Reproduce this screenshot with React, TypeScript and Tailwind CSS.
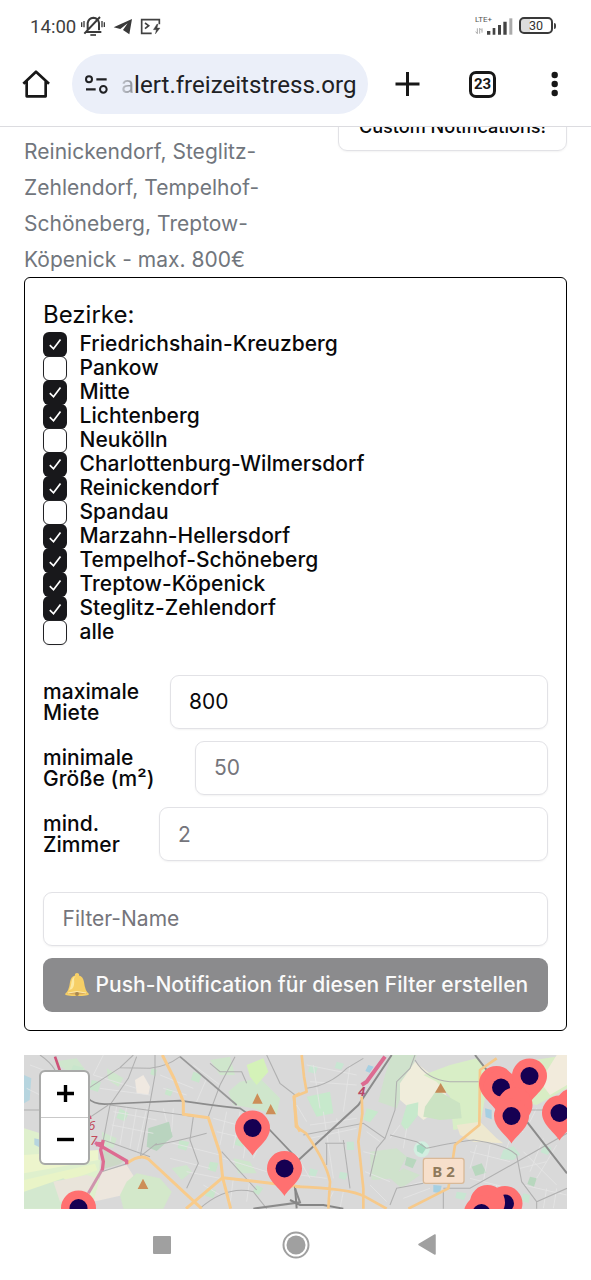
import React from "react";

const districts: [string, boolean][] = [
  ["Friedrichshain-Kreuzberg", true],
  ["Pankow", false],
  ["Mitte", true],
  ["Lichtenberg", true],
  ["Neukölln", false],
  ["Charlottenburg-Wilmersdorf", true],
  ["Reinickendorf", true],
  ["Spandau", false],
  ["Marzahn-Hellersdorf", true],
  ["Tempelhof-Schöneberg", true],
  ["Treptow-Köpenick", true],
  ["Steglitz-Zehlendorf", true],
  ["alle", false],
];

function StatusBar() {
  return (
    <div className="flex h-[54px] items-start pt-[15px] pr-[35px] pl-[30px] font-['Roboto',sans-serif]">
      <span className="w-[47px] pt-[2px] text-[18.6px] leading-[21px] text-[#3f3f3f]">14:00</span>
      <svg className="ml-[3px] h-[22px] w-[26px]" viewBox="240 44 78 66" fill="none" stroke="#3a3a3a" strokeWidth="6">
        <path d="M263 90V68q3-15 17-16q15 1 17 16v22M257 95h47M253 100L300 50" />
        <path d="M271 104h17" strokeWidth="5" />
        <path d="M245 66v14M252 62v19M306 62v19M313 66v14" strokeWidth="4" />
      </svg>
      <svg className="ml-[7px] h-[22px] w-[20px]" viewBox="340 44 60 66">
        <path d="M342 81L397 56L389 102L370 89L384 69L362 86Z" fill="#393939" />
      </svg>
      <svg className="ml-[7px] h-[22px] w-[22px]" viewBox="420 44 66 66" fill="none" stroke="#414141" strokeWidth="5">
        <path d="M455 99H425V58H478V72" />
        <path d="M435 68L446 76L435 85" strokeWidth="5" />
        <path d="M471 71L460 88H469L466 101L480 83H471L474 72Z" fill="#414141" strokeWidth="1" />
      </svg>
      <div className="flex-1" />
      <div className="flex h-[22px] w-[38px] items-start">
        <div className="flex h-[22px] w-[11px] flex-col whitespace-nowrap">
          <span className="text-[8px] leading-[10px] text-[#555]">LTE+</span>
          <svg className="h-[12px] w-[9px]" viewBox="0 0 27 36" fill="none" stroke="#999" strokeWidth="2.500">
            <path d="M7 10v16l-5-6M14 26V10l6 6M21 10v13" />
          </svg>
        </div>
        <svg className="mt-[3px] h-[17px] w-[27px] shrink-0" viewBox="554 53 81 51">
          <path d="M557 92h10v11h-10z M574 83h8v20h-8z M590 74h9v29h-9z M606 64h10v39h-10z" fill="#444" />
          <path d="M624 54h9v49h-9z" fill="#aaa" />
        </svg>
      </div>
      <div className="ml-[6px] flex items-center pt-[2px]">
        <div className="flex h-[17px] w-[34px] items-center justify-center rounded-[5px] border-2 border-[#393939] bg-[linear-gradient(90deg,#ddd_30%,#fff_30%)] pt-px text-[12.500px] leading-[14px] text-[#333]">30</div>
        <div className="ml-px h-[6px] w-[2px] rounded-r bg-[#444]" />
      </div>
    </div>
  );
}

function Toolbar() {
  return (
    <div className="flex h-[60px] items-center font-['Roboto',sans-serif]">
      <svg className="ml-[21px] h-[30px] w-[30px]" viewBox="63 206 90 90" fill="none" stroke="#171717" strokeWidth="8">
        <path d="M70 250L108 214L147 250M80 243V288H137V243" strokeLinejoin="round" />
      </svg>
      <div className="ml-[21px] flex h-[60px] w-[296px] items-center rounded-full bg-[#ebeff9] pl-[12px]">
        <svg className="h-[22px] w-[25px]" viewBox="252 218 75 66" fill="none" stroke="#202124" strokeWidth="6">
          <circle cx="267" cy="237" r="9" />
          <circle cx="310" cy="267" r="10" />
          <path d="M289 237h31M258 267h29" strokeWidth="6.500" />
        </svg>
        <span className="ml-[12px] pt-[2px] text-[24.1px] leading-[32px] whitespace-nowrap text-[#202124]">
          <span className="bg-gradient-to-r from-[#c3c6ce] to-[#8a8d94] bg-clip-text text-transparent">a</span>lert.freizeitstress.org
        </span>
      </div>
      <svg className="ml-[26px] h-[26px] w-[26px]" viewBox="0 0 26 26" stroke="#171717" strokeWidth="3">
        <path d="M1.500 13H25.500M13.500 1V25" />
      </svg>
      <div className="ml-[49px] flex h-[27px] w-[27px] items-center justify-center rounded-[7px] border-[3px] border-[#171717] text-[15px] font-bold text-[#171717]">23</div>
      <svg className="ml-[54px] h-[26px] w-[10px]" viewBox="0 0 10 26" fill="#171717">
        <circle cx="4.700" cy="4" r="3.200" />
        <circle cx="4.700" cy="13" r="3.200" />
        <circle cx="4.700" cy="22" r="3.200" />
      </svg>
    </div>
  );
}

function Checkbox({ label, checked }: { label: string; checked: boolean }) {
  return (
    <div className="flex h-[24.040px] items-start">
      {checked ? (
        <span className="flex h-[25px] w-6 items-center justify-center rounded-[6px] bg-[#18181b]">
          <svg className="h-[14px] w-[14px]" viewBox="0 0 14 14" fill="none" stroke="#fff" strokeWidth="1.700">
            <path d="M1.800 8.200L5.500 11.800L12.500 2.400" />
          </svg>
        </span>
      ) : (
        <span className="h-[25px] w-6 rounded-[6px] border border-[#222225] bg-white shadow-xs" />
      )}
      <span className="ml-[12.500px] text-[21px] leading-[23px] font-medium tracking-[0.03px] whitespace-nowrap">{label}</span>
    </div>
  );
}

function Field({ a, b, value, filled, width }: { a: string; b: string; value: string; filled?: boolean; width: string }) {
  return (
    <div className="flex h-[54px] items-center justify-between">
      <div className="text-[21px] leading-[21px] font-medium tracking-[0.05px] whitespace-nowrap">
        {a}
        <br />
        {b}
      </div>
      <div className={`${width} flex h-[54px] items-center rounded-[9px] border border-[#e2e2e6] pl-[18px] text-[21px] shadow-xs ${filled ? "text-[#09090b]" : "text-[#75757b]"}`}>
        {value}
      </div>
    </div>
  );
}

function Bell() {
  return (
    <svg className="h-[25px] w-[26px] shrink-0" viewBox="0 0 26 25">
      <path d="M1 22Q5 19 6 10Q7 4 11 3.4V2q2-2 4 0v1.4Q19 4 20 10Q21 19 25 22Q25 24 13 24Q1 24 1 22Z" fill="#f6cf66" />
      <path d="M8 17Q11 14 10 7Q10 5 12 4Q8 5 7.500 10Q7 15 5 18Z" fill="#fce9a2" />
      <path d="M2.500 21.500Q13 18.500 23.500 21.500Q13 23.500 2.500 21.500Z" fill="#d9ac5d" />
      <path d="M4 21Q13 18 22 21" fill="none" stroke="#fdeaae" strokeWidth="1" />
      <circle cx="13" cy="22" r="1.900" fill="#a88750" />
    </svg>
  );
}

function Pin({ x, y, plain }: { x: number; y: number; plain?: boolean }) {
  return (
    <g transform={`translate(${x} ${y})`}>
      <path d="M0 27.500C-4 20-17.500 12-17.500 0A17.500 17.500 0 0 1 17.500 0C17.500 12 4 20 0 27.500Z" fill="#ff7070" />
      {!plain && <circle r="9" fill="#160052" />}
    </g>
  );
}

function CityMap() {
  return (
    <svg className="block h-[154px] w-[543px]" viewBox="0 0 543 154">
      <rect width="543" height="154" fill="#d9d9d9" />
      <g transform="translate(-4 -10) scale(.33333)" fill="none">
        <path d="M12 250L70 268L200 330L240 345L235 450L180 492H12Z" fill="#dff0cd" />
        <path d="M12 330L235 315V345L12 385Z" fill="#edf5cc" />
        <path d="M12 405L225 356L232 376L12 450Z" fill="#e9f4c7" />
        <path d="M12 440L130 400L180 430L120 491H12Z" fill="#d3e8cf" />
        <path d="M100 410L200 390L230 400L190 470L120 470Z" fill="#e9e4da" />
        <path d="M245 380L320 360L345 400L310 450L220 470Z" fill="#ede6dd" />
        <path d="M250 310L315 345L300 358L250 372Z" fill="#ccd8c6" />
        <path d="M345 105L370 90L390 125L385 150L350 145Z" fill="#f0e9e1" />
        <path d="M385 250L447 230L458 275L410 318L380 305Z" fill="#b9d4bf" />
        <path d="M320 410L350 385L420 400L455 440L430 491H310L300 450Z" fill="#d3e8ca" />
        <path d="M570 45L630 35L645 90L600 90ZM625 140L660 110L720 100L780 160L770 210L700 190L640 180Z" fill="#cfe6cc" />
        <path d="M680 60L730 40L745 80L710 120L690 95Z" fill="#d4f2b8" />
        <path d="M100 50L170 40L200 80L160 90ZM260 70L310 100L295 125L265 105ZM245 260L290 280L280 310L250 300ZM455 370L500 360L515 380L485 405ZM640 340L690 350L710 385L655 385Z" fill="#cfe6cd" />
        <path d="M12 90l22 10-5 65-17 10ZM43 280l20 4v25l-20-10Z" fill="#b7d5df" />
        <path d="M160 60l30 8-12 28-30-6ZM215 105l28 6-9 30-25-8ZM300 190l26 15-12 24-25-10ZM478 285l30 6-10 26-25-8ZM520 80l25 8-8 25-24-8ZM650 280l30 4-13 21-24-6ZM570 350l25 4-8 27-24-7ZM395 70l16 5-6 18-14-5ZM440 130l20 6-8 18-18-6ZM560 430l28 6-8 24-25-8ZM710 420l20 10-14 20-18-9Z" fill="#c8e6cc" />
        <g stroke="#e4e4e4" strokeWidth="2.500">
          <path d="M280 200L410 225M275 240L400 265M290 185L270 290M320 185L300 300M350 188L330 310M380 190L350 325M220 90L350 130M240 130L390 150M420 90L520 130M430 130L500 150M520 60L600 120M560 100L530 170M430 190L440 230M460 190L455 260M580 220L690 250M590 260L720 290M620 200L600 300M660 200L640 310M690 210L670 340M610 340L740 380M640 400L630 480M690 400L680 470M740 250L700 340M440 290L600 330M450 340L570 370M500 380L600 400M550 420L600 450M30 60L110 90M20 130L60 150M250 30L220 90" />
        </g>
        <g stroke="#b0b0b0" strokeWidth="3.200">
          <path d="M60 30Q90 50 105 75M12 195H65M205 130L300 68L390 70Q440 65 480 35M300 68L340 30M350 35L325 100L270 180L250 285L390 335M405 30V90L360 340M320 356L245 380M270 180L490 210L520 215L510 285L535 355L500 430M405 300Q470 290 560 265M360 335L410 295M645 35L600 120L565 215M570 55L600 80L665 80L680 115M740 30L780 115L825 150M205 220L265 180M605 320L710 435M540 490Q620 420 700 440L740 491" />
        </g>
        <path d="M205 160Q220 180 265 177L480 167Q550 178 660 190L740 245L840 350" stroke="#8c8c8c" strokeWidth="5" />
        <path d="M480 35L650 180" stroke="#989898" strokeWidth="5" />
        <path d="M700 491L840 472L825 430" stroke="#8b8b8b" strokeWidth="6" />
        <path d="M427 30L463 102L490 170V208L565 218L600 325L608 398L632 491M320 356Q360 325 385 342L545 491M498 491L608 398L840 425M840 145L822 155L830 240L840 260" stroke="#f8cb8b" strokeWidth="9" strokeLinejoin="round" />
        <path d="M105 35L120 78M200 198L212 222" stroke="#ce5479" strokeWidth="8" />
        <path d="M247 373L205 445" stroke="#cf93ad" strokeWidth="9" />
        <path d="M225 293L320 348V358M250 285L242 315L250 350L247 376" stroke="#dd6b91" strokeWidth="10" />
        <path d="M228 297l24 2" stroke="#dd6b91" strokeWidth="14" />
        <g fill="#cd8e58">
          <path d="M697 176L712 145L728 176ZM737 208L752 177L768 208ZM353 432L369 401L385 432Z" />
        </g>
        <g fill="#c24b5c" fontFamily="Noto Sans, sans-serif" fontSize="40" fontStyle="italic">
          <text x="204" y="256">6</text>
          <text x="210" y="300">7</text>
        </g>
      </g>
      <g transform="translate(266 -10) scale(.33333)" fill="none">
        <path d="M285 90L305 30H380L350 110L320 190L265 170ZM240 320L320 310L350 335L315 400L245 405ZM300 400L340 370L390 390L335 430Z" fill="#cfe2cc" />
        <path d="M330 115L375 50L450 110L480 175L400 225L330 165Z" fill="#f0eddb" />
        <path d="M400 90L480 60L560 40L600 80L570 240L490 255L480 155L440 110Z" fill="#d8eec6" />
        <path d="M405 185L440 135L510 175L515 220L450 225L400 215Z" fill="#cbe3c3" />
        <path d="M500 240L570 230L620 280L640 295L550 290L510 270Z" fill="#eee8cf" />
        <path d="M700 50L831 30V130L740 180L690 170Z" fill="#d8edc4" />
        <path d="M750 110L800 30H831V120L780 150Z" fill="#f2ebdc" />
        <path d="M50 155L120 140L130 205L80 215ZM230 190l35 10-25 32-20-8ZM350 180l35-8-2 40-35 45-15-20Z" fill="#c7e9cc" />
        <circle cx="395" cy="313" r="24" fill="#d2eee0" />
        <path d="M380 302l15-7 14 14-12 18-16-8Z" fill="#a5dcc2" />
        <path d="M170 290h22v25h-22ZM640 315l30-12 20 25-20 17-40-3ZM700 445l20 5-4 24-22-5ZM760 300l24 8-10 22-22-8ZM500 440l30 5-8 20-26-6ZM60 60l24 6-8 20-22-6ZM140 50l22 6-8 18-20-5ZM60 370l24 6-8 20-20-6ZM150 380l24 5-8 20-20-6Z" fill="#c8e6d2" />
        <path d="M350 335l30 9-12 26-24-10ZM545 365l30-10 14 28-33 10ZM600 450l30 12-12 20-25-8ZM720 395l20 5-8 25-20-8Z" fill="#b8d7be" />
        <path d="M430 420l25 2-5 23-20-4ZM585 190l20 5v28l-18-7ZM235 60l16 5-12 18-13-5Z" fill="#a5cfe2" />
        <g stroke="#e5e5e5" strokeWidth="2.500">
          <path d="M50 60L200 90M60 110L200 120M60 240L200 220M60 280L200 250M100 200L130 400M140 220L150 290M180 60L160 200M70 60L90 190M230 260L270 290M220 320L260 330M225 380L300 410M240 420L290 470M330 240L300 280M350 250L340 310M320 430L440 400M340 460L420 430M540 320L660 350M560 300L540 370M600 300L580 410M540 400L660 430M570 430L540 480M620 420L610 490M700 320L800 420M690 370L770 350M700 420L830 450M760 280L720 380M800 300L740 400M770 430L760 490M800 430L790 490M20 180L50 230M20 330L60 400M30 390L110 400M130 440L110 480M160 440L150 490M640 240L700 260M690 200L650 310M740 190L720 230" />
        </g>
        <g stroke="#b0b0b0" strokeWidth="3.200">
          <path d="M50 130Q120 120 170 70L220 40M375 30L360 70L320 110L315 195L285 280L220 235L40 270M285 280L260 310L240 395M375 45Q410 105 480 110H570M410 310Q500 290 550 285Q650 300 680 330L695 410L740 470V491M460 430H540L831 265M740 470L831 430M110 295V360M160 285L180 430M105 295H165M300 270L380 290L410 310M300 480L320 430L400 415M460 440V491M700 195H760" />
        </g>
        <path d="M305 30L205 180L20 350M555 30L831 385" stroke="#8b8b8b" strokeWidth="6" />
        <path d="M0 465L30 480H100L160 491M15 425L20 490" stroke="#858585" strokeWidth="6" />
        <path d="M35 30L42 95L50 140L12 155L18 245L48 265Q110 355 120 410L115 491M215 155L217 205L205 290L220 430V491M15 425Q180 430 225 455L290 491M620 40L570 75L568 240L495 300L475 430L355 491" stroke="#f6c98a" strokeWidth="8" strokeLinejoin="round" />
        <path d="M285 35L230 110L215 120" stroke="#dd6b91" strokeWidth="12" />
        <text x="205" y="154" fill="#b94767" fontFamily="Noto Sans, sans-serif" fontSize="38" fontWeight="bold" fontStyle="italic">4</text>
        <path d="M435 143L452 114L469 143Z" fill="#c58b58" />
        <rect x="400" y="340" width="122" height="75" rx="7" fill="#f7dfcb" stroke="#d9b998" strokeWidth="4" />
        <text x="427" y="395" fill="#8f7a5c" fontFamily="Noto Sans, sans-serif" fontSize="45" fontWeight="bold">B 2</text>
      </g>
      <Pin x={228.500} y={73} />
      <Pin x={260.500} y={113.500} />
      <Pin x={54.500} y={153} />
      <Pin x={472.500} y={28.500} plain />
      <Pin x={477} y={32.500} />
      <Pin x={505.500} y={21} />
      <Pin x={491} y={50} plain />
      <Pin x={487.500} y={61} />
      <Pin x={549} y={51} plain />
      <Pin x={535.500} y={58} />
      <Pin x={481} y={148.500} />
      <Pin x={463.500} y={147.500} plain />
      <Pin x={457.500} y={158} />
    </svg>
  );
}

export default function App() {
  return (
    <div className="flex h-[1280px] w-[591px] flex-col overflow-hidden bg-white font-['Inter',sans-serif] text-[#09090b]">
      <StatusBar />
      <Toolbar />
      <div className="h-[13px] shrink-0 border-b border-[#dcdce0]" />
      <main className="flex h-[1082px] shrink-0 flex-col overflow-hidden px-6">
        <div className="flex h-[150px] shrink-0 items-start justify-between">
          <p className="pt-[7px] text-[21px] leading-9 tracking-[0.03px] whitespace-nowrap text-[#71767d]">
            Reinickendorf, Steglitz-
            <br />
            Zehlendorf, Tempelhof-
            <br />
            Schöneberg, Treptow-
            <br />
            Köpenick - max. 800€
          </p>
          <div className="-mt-[30px] flex h-[54px] w-[229px] items-center justify-center rounded-[9px] border border-[#e2e2e6] pt-[6px] text-[18.1px] font-medium whitespace-nowrap shadow-xs">
            Custom Notifications!
          </div>
        </div>
        <section className="flex h-[754px] shrink-0 flex-col rounded-[6px] border border-black px-[18px] pt-[19px]">
          <h2 className="h-[34.800px] text-[24px] leading-9">Bezirke:</h2>
          <div>
            {districts.map(([label, checked]) => (
              <Checkbox key={label} label={label} checked={checked} />
            ))}
          </div>
          <div className="mt-[30.700px] flex flex-col gap-[12.2px]">
            <Field a="maximale" b="Miete" value="800" filled width="w-[378px]" />
            <Field a="minimale" b="Größe (m²)" value="50" width="w-[353px]" />
            <Field a="mind." b="Zimmer" value="2" width="w-[389px]" />
          </div>
          <div className="mt-[30.600px] flex h-[54px] items-center rounded-[9px] border border-[#e2e2e6] pl-[18.500px] text-[21px] text-[#75757b] shadow-xs">
            Filter-Name
          </div>
          <button className="mt-3 flex h-[54px] items-center rounded-[9px] bg-[#8b8b8d] pl-[21px] text-[21px] font-medium whitespace-nowrap text-[#fafafa]">
            <Bell />
            <span className="ml-[5.500px] tracking-[0.03px]">Push-Notification für diesen Filter erstellen</span>
          </button>
        </section>
        <div className="relative mt-6 h-[154px] shrink-0 overflow-hidden">
          <CityMap />
          <div className="absolute top-[15px] left-[15px] flex h-[95px] w-[51px] flex-col rounded-[6px] border-2 border-[#a9aaa9] bg-white bg-clip-padding text-black">
            <button className="flex h-[46px] items-center justify-center border-b border-[#c9c9c9] pb-[3px] pl-[2px]">
              <svg className="h-[17px] w-[17px]" viewBox="0 0 17 17" stroke="#000" strokeWidth="3.400">
                <path d="M0 8.500H17M8.500 0V17" />
              </svg>
            </button>
            <button className="flex h-[45px] items-center justify-center pb-[3px] pl-[2px]">
              <svg className="h-[17px] w-[17px]" viewBox="0 0 17 17" stroke="#000" strokeWidth="3.400">
                <path d="M0 8.500H17" />
              </svg>
            </button>
          </div>
        </div>
      </main>
      <nav className="flex h-[71px] shrink-0 items-center pl-[153px]">
        <div className="h-[18px] w-[18px] rounded-[1px] bg-[#a0a0a0]" />
        <svg className="ml-[110.500px] h-[28px] w-[28px]" viewBox="0 0 28 28">
          <circle cx="14" cy="14" r="12.500" fill="none" stroke="#a0a0a0" strokeWidth="2" />
          <circle cx="14" cy="14" r="9.500" fill="#a0a0a0" />
        </svg>
        <svg className="ml-[107.500px] h-[21px] w-[19px]" viewBox="0 0 19 21">
          <path d="M18 1V20L2 10.500Z" fill="#a0a0a0" stroke="#a0a0a0" strokeLinejoin="round" strokeWidth="1.500" />
        </svg>
      </nav>
    </div>
  );
}
